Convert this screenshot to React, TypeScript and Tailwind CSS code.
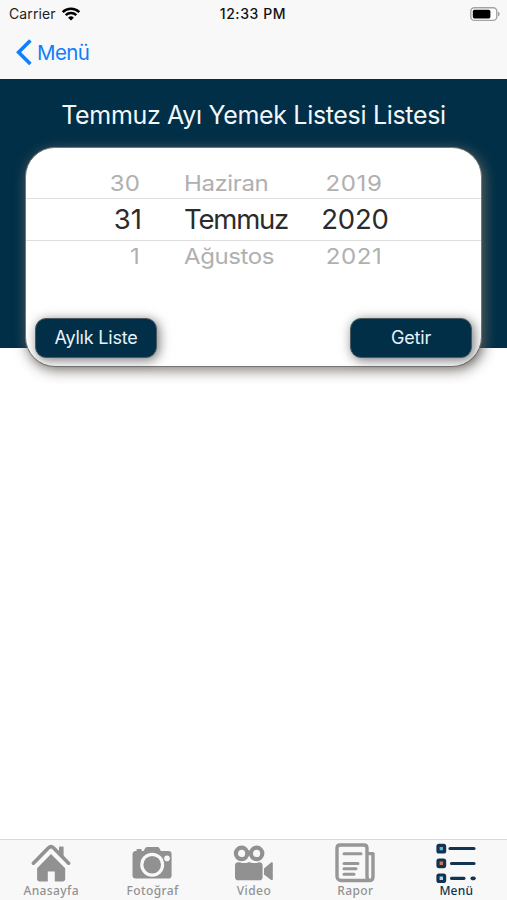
import type { ReactNode } from "react";

const WHEEL = [
  { day: "30", month: "Haziran", year: "2019" },
  { day: "31", month: "Temmuz", year: "2020" },
  { day: "1", month: "Ağustos", year: "2021" },
];

function StatusBar() {
  return (
    <div className="grid h-7 grid-cols-3 items-center pl-[9px] pr-[7px] text-black">
      <div className="flex items-center gap-[5px]">
        <span className="text-[14px] leading-none tracking-[0.1px] text-[#222]">Carrier</span>
        <svg width="20" height="14" viewBox="0 0 19 14" fill="none" stroke="#000" strokeWidth="2.5">
          <path d="M1.2 5.2a12 12 0 0 1 16.6 0" />
          <path d="M4.2 8.2a7.7 7.7 0 0 1 10.6 0" />
          <path d="M9.5 13.6 6.6 10.7a4.1 4.1 0 0 1 5.8 0z" fill="#000" stroke="none" />
        </svg>
      </div>
      <span className="pr-[3px] text-center text-[14px] font-medium leading-none tracking-[0.6px] text-[#111]">12:33 PM</span>
      <svg className="justify-self-end" width="30" height="15" viewBox="0 0 30 15">
        <rect x="0.8" y="0.8" width="26" height="12.6" rx="3.6" fill="#fff" stroke="#a3a3a3" strokeWidth="1.4" />
        <rect x="2.8" y="2.8" width="17.6" height="8.6" rx="1.6" fill="#000" />
        <path d="M28 4.8v4.6c1-.4 1.7-1.2 1.7-2.3s-.7-1.9-1.7-2.3z" fill="#a3a3a3" />
      </svg>
    </div>
  );
}

function NavBar() {
  return (
    <div className="flex h-[51px] items-center gap-[5px] pb-[2px] pl-4 text-[#0f7ffa]">
      <svg width="16" height="27" viewBox="0 0 16 27" fill="none" stroke="currentColor" strokeWidth="3.6">
        <path d="M14.4 1.4 2.6 13.2l11.8 11.8" />
      </svg>
      <span className="pt-[2px] text-[20.5px] leading-none tracking-[-0.6px]">Menü</span>
    </div>
  );
}

function DatePicker() {
  return (
    <div className="pt-[18px]">
      {WHEEL.map((row, i) =>
        i === 1 ? (
          <div
            key={row.year}
            className="flex h-[43px] items-center border-y border-[#dedede] text-[27.5px] leading-none text-[#2b2b2b]"
          >
            <span className="w-[116px] text-right">{row.day}</span>
            <span className="w-[138px] pl-[42px] tracking-[-1.2px]">{row.month}</span>
            <span className="w-[150px] text-center tracking-[-0.2px]">{row.year}</span>
          </div>
        ) : (
          <div
            key={row.year}
            className="flex h-[32px] items-center text-[24px] leading-none text-[#b0b0b0] first:pt-[3px]"
          >
            <span className="w-[114px] scale-y-[0.9] text-right tracking-[0.2px]">{row.day}</span>
            <span className="w-[140px] scale-y-[0.9] pl-[44px] tracking-[-0.4px]">{row.month}</span>
            <span className="w-[148px] scale-y-[0.9] text-center tracking-[0.6px]">{row.year}</span>
          </div>
        )
      )}
    </div>
  );
}

function Button({ children }: { children: ReactNode }) {
  return (
    <button className="h-[40px] w-[122px] rounded-[11px] border border-[#4b5a60] bg-[#012f47] text-[18px] leading-none tracking-[-0.2px] text-[#e9f2f8] shadow-[2px_2px_12px_rgba(0,0,0,0.55)]">
      {children}
    </button>
  );
}

const HomeIcon = () => (
  <svg width="40" height="38" viewBox="0 0 40 38" fill="#919191">
    <path d="M28 3.600q0-1 1-1h2.600q1 0 1 1V14L28 10z" />
    <path d="M2.400 19.200 17.600 3.700c1.600-1.500 3.200-1.500 4.800 0l15.200 15.500" fill="none" stroke="#919191" strokeWidth="3.600" strokeLinecap="round" strokeLinejoin="round" />
    <path d="M20 10 34.200 24.200v10.600c0 1.800-1 2.700-2.700 2.700h-7.700V27.500h-7v10H8.800c-1.700 0-2.700-.9-2.700-2.700V24.200z" />
  </svg>
);

const CameraIcon = () => (
  <svg width="40" height="38" viewBox="0 0 40 38">
    <path d="M3.600 7.100h1V5h5v2.100h2l1.700-3c.5-.8 1.200-1.200 2.200-1.200h9.600c1 0 1.800.5 2.300 1.400l1.500 2.800h7.400c2.200 0 3.300 1.100 3.300 3.300v20.800c0 2.300-1.100 3.400-3.400 3.400H3.800c-2.200 0-3.300-1.100-3.300-3.300V10.500c0-2.200 1.100-3.400 3.100-3.400z" fill="#919191" />
    <circle cx="20.200" cy="20.800" r="12" fill="#f8f8f8" />
    <circle cx="20.200" cy="20.800" r="8.800" fill="#919191" />
    <circle cx="35" cy="14.400" r="2.800" fill="#f8f8f8" />
  </svg>
);

const VideoIcon = () => (
  <svg width="40" height="38" viewBox="0 0 40 38" fill="#919191">
    <circle cx="8.600" cy="9.400" r="5.700" fill="none" stroke="#919191" strokeWidth="4.200" />
    <circle cx="23.600" cy="9.400" r="5.700" fill="none" stroke="#919191" strokeWidth="4.200" />
    <path d="M5.400 18.200h1.800c2 1.200 6 1.200 8 0h2c2.500 1.200 6 1.200 8.500 0h.5c2.300 0 3.400 1.100 3.400 3.400v11.300c0 2.300-1.100 3.400-3.400 3.400H5.400C3.100 36.300 2 35.200 2 32.900V21.600c0-2.300 1.100-3.400 3.400-3.400z" />
    <path d="M31 24.400 37.800 18.800c1.200-.9 2-.5 2 1v15c0 1.500-.8 1.900-2 1L31 30.600z" />
  </svg>
);

const ReportIcon = () => (
  <svg width="40" height="40" viewBox="0 0 40 40" fill="none" stroke="#979797" strokeWidth="3.400" strokeLinecap="round" strokeLinejoin="round">
    <path d="M34.500 37.500H6.200A4.200 4.200 0 0 1 2 33.300V5.200C2 3.300 3 2 5 2h24c2 0 3 1.200 3 3.200v28c0 2.500 1 4.300 3 4.300s3-1.500 3-4V10.600h-6" />
    <path d="M9 10.800h17M9 20.400h14M9 25.800h12M9 31.200h10" strokeWidth="3" />
  </svg>
);

const MenuIcon = () => (
  <svg width="40" height="40" viewBox="0 0 40 40" fill="none" stroke="#123451" strokeWidth="3.200" strokeLinecap="round">
    <rect x="2" y="2.300" width="6.600" height="6.600" rx="1" fill="#59b9d4" />
    <rect x="2" y="17" width="6.600" height="6.600" rx="1" fill="#d8734f" />
    <rect x="2" y="32" width="6.600" height="6.600" rx="1" fill="#a9dce4" />
    <path d="M14 5.500h24M15.500 20.500H38M15.500 35.300H28" />
    <path d="M36.400 35.300h1.400" strokeWidth="3.800" />
  </svg>
);

const TABS = [
  { label: "Anasayfa", icon: <HomeIcon /> },
  { label: "Fotoğraf", icon: <CameraIcon /> },
  { label: "Video", icon: <VideoIcon /> },
  { label: "Rapor", icon: <ReportIcon /> },
  { label: "Menü", icon: <MenuIcon />, active: true },
];

function TabBar() {
  return (
    <nav className="grid h-[61px] shrink-0 grid-cols-5 border-t border-[#dadada] bg-[#f8f8f8] font-['Noto_Sans',sans-serif]">
      {TABS.map((tab) => (
        <div key={tab.label} className="flex flex-col items-center pt-[3px]">
          <div className="flex h-10 items-center">{tab.icon}</div>
          <span
            className={
              tab.active
                ? "text-[12px] font-medium leading-[15px] tracking-[0.2px] text-[#123451]"
                : "pl-px text-[12px] font-medium leading-[15px] tracking-[0.4px] text-[#929292]"
            }
          >
            {tab.label}
          </span>
        </div>
      ))}
    </nav>
  );
}

export default function App() {
  return (
    <div className="flex h-[900px] w-[507px] flex-col overflow-hidden bg-white font-['Inter',sans-serif]">
      <header className="h-[79px] shrink-0 bg-[#f8f8f8]">
        <StatusBar />
        <NavBar />
      </header>

      <main className="flex-1">
        <section className="h-[269px] bg-[#012f47]">
          <h1 className="h-[68px] pt-[22px] text-center text-[25px] leading-[28px] tracking-[-0.33px] text-[#f1f7fb]">
            Temmuz Ayı Yemek Listesi Listesi
          </h1>
          <div className="mx-auto flex h-[220px] w-[457px] flex-col justify-between rounded-[30px] border border-[#777] bg-white pb-[8px] shadow-[2px_3px_14px_rgba(110,105,100,0.9)]">
            <DatePicker />
            <div className="flex justify-between px-[9px]">
              <Button>Aylık Liste</Button>
              <Button>Getir</Button>
            </div>
          </div>
        </section>
      </main>

      <TabBar />
    </div>
  );
}
